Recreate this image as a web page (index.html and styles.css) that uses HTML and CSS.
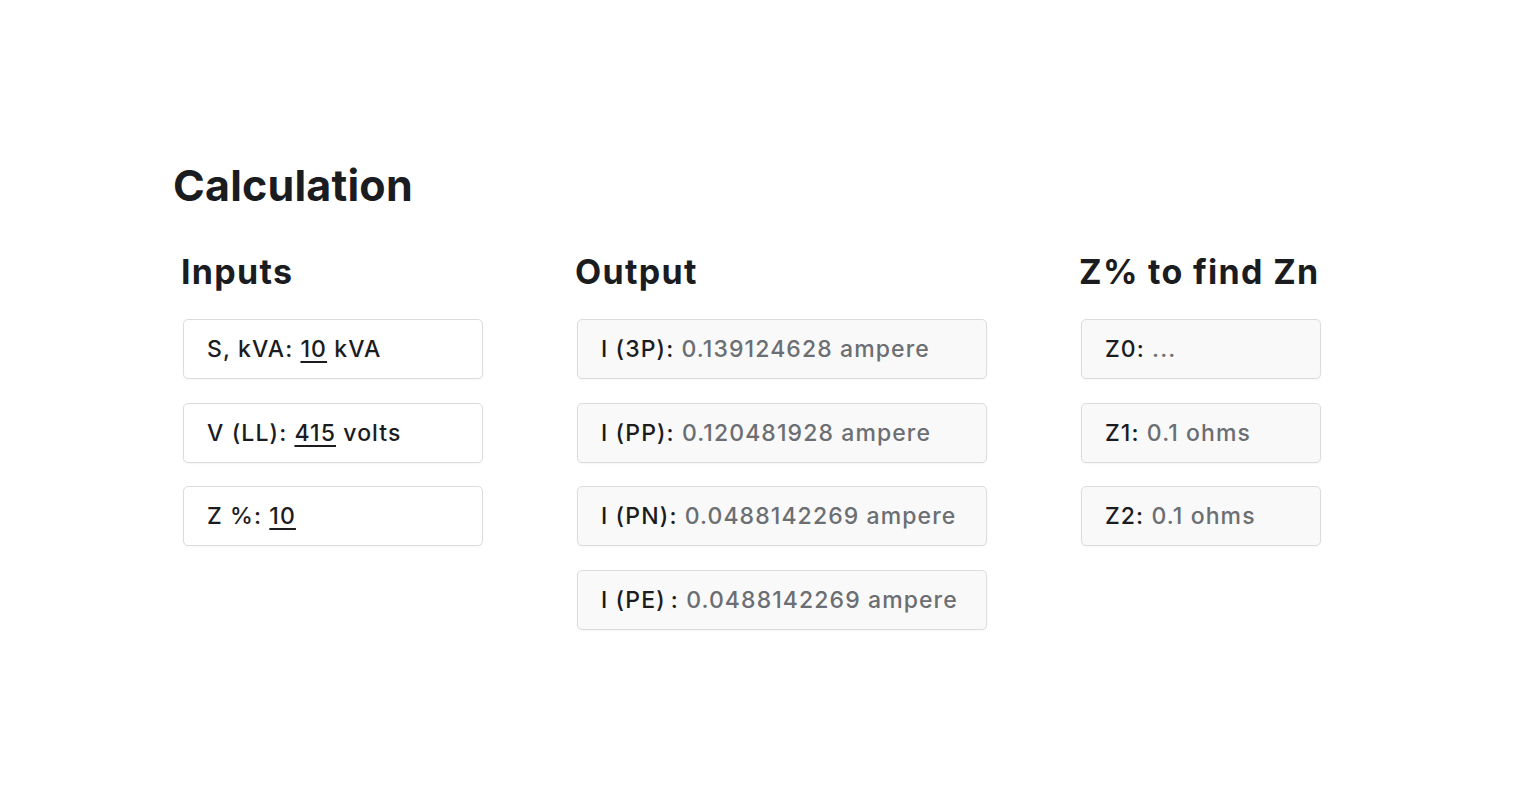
FILE: index.html
```html
<!DOCTYPE html>
<html lang="en">
<head>
  <meta charset="UTF-8" />
  <meta name="viewport" content="width=device-width, initial-scale=1" />
  <title>Calculation</title>
  <link rel="stylesheet" href="styles.css">
</head>
<body>
  <div class="page">
    <h1>Calculation</h1>
    <div class="columns">
      <div class="col col-inputs">
        <h2>Inputs</h2>
        <div class="field">S, kVA: <span class="edit">10</span> kVA</div>
        <div class="field">V (LL): <span class="edit">415</span> volts</div>
        <div class="field">Z %: <span class="edit">10</span></div>
      </div>

      <div class="col col-output">
        <h2>Output</h2>
        <div class="field result">I (3P): <span class="val">0.139124628 ampere</span></div>
        <div class="field result">I (PP): <span class="val">0.120481928 ampere</span></div>
        <div class="field result">I (PN): <span class="val">0.0488142269 ampere</span></div>
        <div class="field result">I (PE)&thinsp;: <span class="val">0.0488142269 ampere</span></div>
      </div>

      <div class="col col-z">
        <h2>Z% to find Zn</h2>
        <div class="field result">Z0: <span class="val">...</span></div>
        <div class="field result">Z1: <span class="val">0.1 ohms</span></div>
        <div class="field result">Z2: <span class="val">0.1 ohms</span></div>
      </div>
    </div>
  </div>
</body>
</html>
```

FILE: styles.css
```css
body {
  margin: 0;
  font-family: Inter, "Open Sans", sans-serif;
  background: #fff;
  color: #1b1c1f;
}
.page {
  padding: 159px 0 0 173px;
}
h1 {
  margin: 0 0 41px 0;
  font-size: 43px;
  line-height: 52px;
  font-weight: 700;
  letter-spacing: 0.2px;
}
.columns {
  display: flex;
  gap: 94px;
  padding-left: 10px;
}
.col-inputs { width: 300px; }
.col-output { width: 410px; }
.col-z { width: 240px; }
h2 {
  margin: 0 0 27px -2px;
  font-size: 34px;
  line-height: 40px;
  font-weight: 700;
  letter-spacing: 1.3px;
  white-space: nowrap;
}
.field {
  box-sizing: border-box;
  height: 60px;
  margin-bottom: 23.5px;
  padding: 0 23px;
  border: 1px solid #dcdcdc;
  border-radius: 5px;
  background: #fff;
  font-size: 23px;
  font-weight: 500;
  letter-spacing: 1.1px;
  line-height: 58px;
  white-space: nowrap;
  box-shadow: 0 1px 2px rgba(0,0,0,0.04);
}
.result {
  background-color: #f9f9f9;
}
.edit {
  text-decoration: underline;
  text-underline-offset: 4px;
  text-decoration-thickness: 1.5px;
}
.val {
  color: #6b6e72;
}
```
